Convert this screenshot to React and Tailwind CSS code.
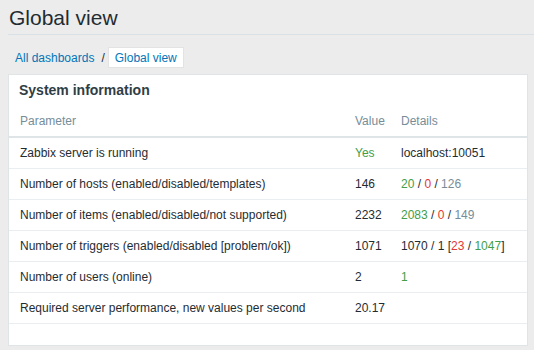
const rows = [
  {
    param: "Zabbix server is running",
    value: <span className="text-[#429e47]">Yes</span>,
    details: <span>localhost:10051</span>,
  },
  {
    param: "Number of hosts (enabled/disabled/templates)",
    value: "146",
    details: (
      <span>
        <span className="text-[#429e47]">20</span> / <span className="text-[#e33734]">0</span> /{" "}
        <span className="text-[#768d99]">126</span>
      </span>
    ),
  },
  {
    param: "Number of items (enabled/disabled/not supported)",
    value: "2232",
    details: (
      <span>
        <span className="text-[#429e47]">2083</span> / <span className="text-[#e33734]">0</span> /{" "}
        <span className="text-[#768d99]">149</span>
      </span>
    ),
  },
  {
    param: "Number of triggers (enabled/disabled [problem/ok])",
    value: "1071",
    details: (
      <span>
        1070 / 1 [<span className="text-[#e33734]">23</span> / <span className="text-[#429e47]">1047</span>]
      </span>
    ),
  },
  {
    param: "Number of users (online)",
    value: "2",
    details: <span className="text-[#429e47]">1</span>,
  },
  {
    param: "Required server performance, new values per second",
    value: "20.17",
    details: null,
  },
];

export default function App() {
  return (
    <div className="min-h-screen bg-[#ececec] font-['Liberation_Sans',Arial,sans-serif] text-[12px] text-[#1f2c33]">
      {/* page title */}
      <div className="ml-[8px] border-b border-[#d9e1e7] pt-[6px] pb-[4px]">
        <h1 className="text-[21px] leading-[24px] pl-[1px]">Global view</h1>
      </div>

      {/* breadcrumbs */}
      <div className="flex items-center mt-[12px] pl-[15px] h-[21px]">
        <a className="text-[#0275b8]">All dashboards</a>
        <span className="ml-[7px] mr-[3px] text-[#1f2c33]">/</span>
        <span className="h-[21px] pt-[3px] pb-[1px] leading-[15px] px-[6px] bg-white border border-[#e3e3e3] text-[#0275b8]">
          Global view
        </span>
      </div>

      {/* widget */}
      <div className="mt-[6px] ml-[8px] w-[520px] bg-white border border-[#dfe4e7] pb-[21px]">
        <div className="h-[31px] flex items-center pl-[10px]">
          <h4 className="text-[14px] font-bold text-[#2f3e46]">System information</h4>
        </div>

        <div className="flex items-center h-[32px] px-[11px] border-b-2 border-[#dfe4e7] text-[#768d99]">
          <div className="w-[335px]">Parameter</div>
          <div className="w-[46px]">Value</div>
          <div className="flex-1">Details</div>
        </div>

        {rows.map((r, i) => (
          <div key={i} className="flex items-center h-[31px] px-[11px] border-b border-[#ebeef0]">
            <div className="w-[335px]">{r.param}</div>
            <div className="w-[46px]">{r.value}</div>
            <div className="flex-1">{r.details}</div>
          </div>
        ))}
      </div>
    </div>
  );
}
